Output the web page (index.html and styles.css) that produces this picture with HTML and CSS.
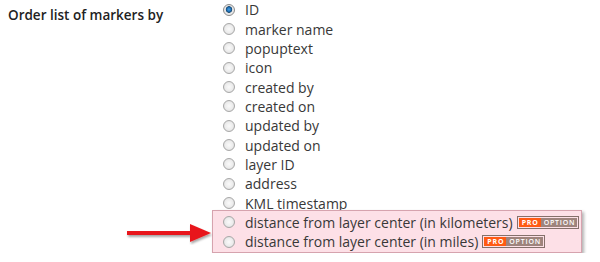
FILE: index.html
```html
<!DOCTYPE html>
<html lang="en">
<head>
    <meta charset="UTF-8">
    <title>Settings</title>
    <link rel="stylesheet" href="styles.css">
</head>
<body>

    <div class="form-row">
        <div class="form-label">Order list of markers by</div>
        <div class="options">
            <label class="option"><span class="radio checked"></span>ID</label>
            <label class="option"><span class="radio"></span>marker name</label>
            <label class="option"><span class="radio"></span>popuptext</label>
            <label class="option"><span class="radio"></span>icon</label>
            <label class="option"><span class="radio"></span>created by</label>
            <label class="option"><span class="radio"></span>created on</label>
            <label class="option"><span class="radio"></span>updated by</label>
            <label class="option"><span class="radio"></span>updated on</label>
            <label class="option"><span class="radio"></span>layer ID</label>
            <label class="option"><span class="radio"></span>address</label>
            <label class="option"><span class="radio"></span>KML timestamp</label>
            <div class="pro-box">
                <svg class="arrow" width="90" height="24" viewBox="0 0 90 24">
                    <defs>
                        <filter id="sh" x="-10%" y="-30%" width="130%" height="180%">
                            <feDropShadow dx="1" dy="2" stdDeviation="1.2" flood-color="#000" flood-opacity="0.35"/>
                        </filter>
                    </defs>
                    <g filter="url(#sh)">
                        <rect x="4" y="10" width="66" height="4" fill="#e8191c"/>
                        <polygon points="67,3 88,12 67,21" fill="#e8191c"/>
                    </g>
                </svg>
                <label class="option"><span class="radio"></span>distance from layer center (in kilometers)<span class="badge"><b>PRO</b><i>OPTION</i></span></label>
                <label class="option"><span class="radio"></span>distance from layer center (in miles)<span class="badge"><b>PRO</b><i>OPTION</i></span></label>
            </div>
        </div>
    </div>

</body>
</html>
```

FILE: styles.css
```css
body {
    margin: 0;
    background: #fff;
    font-family: 'Open Sans', sans-serif;
    color: #383838;
}

.form-row {
    display: flex;
    padding-left: 8px;
}

.form-label {
    width: 215px;
    flex-shrink: 0;
    font-weight: 600;
    font-size: 13.5px;
    line-height: 20px;
    padding-top: 5px;
    color: #222;
}

.options {
    display: flex;
    flex-direction: column;
}

.option {
    display: flex;
    align-items: center;
    height: 19.35px;
    font-size: 14px;
    white-space: nowrap;
}

.radio {
    width: 10px;
    height: 10px;
    border: 1px solid #a8a8a8;
    border-radius: 50%;
    background: radial-gradient(circle at 50% 50%, #fafafa 0%, #ececec 55%, #cfcfcf 100%);
    margin-right: 10px;
}

.radio.checked {
    border-color: #8a8a8a;
    background: radial-gradient(circle at 50% 45%, #4aa3e6 0%, #1d6db3 28%, #17466e 40%, #e4e4e4 48%, #f4f4f4 100%);
}

.pro-box {
    position: relative;
    align-self: flex-start;
    margin: -3px 0 0 -11px;
    padding: 2px 2px 1px 10px;
    background: #fde0e7;
    border: 1px solid #d6a3ae;
    box-shadow: 2px 2px 3px rgba(0, 0, 0, 0.3);
}

.arrow {
    position: absolute;
    right: 100%;
    top: 10px;
}

.badge {
    display: inline-flex;
    margin-left: 4px;
    border: 1px solid #85706b;
    padding: 1px;
    background: #fde0e7;
    font-size: 7px;
    letter-spacing: 0.8px;
    line-height: 9px;
    color: #fff;
}

.badge b {
    background: #ff5a14;
    padding: 0 2px 0 3px;
    font-weight: 700;
}

.badge i {
    font-style: normal;
    background: #9e847d;
    padding: 0 2px 0 3px;
    font-weight: 600;
}
```
